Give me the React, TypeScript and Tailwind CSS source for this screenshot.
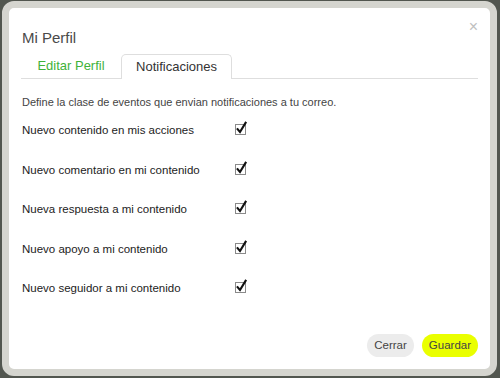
const options = [
  'Nuevo contenido en mis acciones',
  'Nuevo comentario en mi contenido',
  'Nueva respuesta a mi contenido',
  'Nuevo apoyo a mi contenido',
  'Nuevo seguidor a mi contenido',
];

function CheckedBox() {
  return (
    <svg width="16" height="16" viewBox="0 0 16 16" className="block">
      <rect x="1.5" y="3.5" width="10" height="10" fill="#fff" stroke="#8a8a8a" strokeWidth="1" />
      <path d="M3.6 8.2 L6 11 L11.6 1.8" fill="none" stroke="#111" strokeWidth="2.1" strokeLinecap="square" />
    </svg>
  );
}

export default function App() {
  return (
    <div className="h-[378px] w-[500px] overflow-hidden bg-[#52564f] pl-[2px] pt-[1px] font-['Liberation_Sans',Arial,sans-serif]">
      <div className="h-[375px] w-[495px] rounded-[12px] border-[7px] border-[#d5d5cf] bg-white">
        <div className="relative flex h-full flex-col rounded-[3px] px-[12px] pt-[21px]">
          <button className="absolute right-[12px] top-[11px] text-[16px] leading-none text-[#c0c0c0]">×</button>
          <h1 className="pl-px text-[15px] leading-[18px] text-[#4a4a4a]">Mi Perfil</h1>

          <div className="mt-[7px] flex h-[25px] items-end border-b border-[#dedede]">
            <div className="flex h-[24px] w-[100px] items-center justify-center text-[13px] text-[#3fb23a]">
              Editar Perfil
            </div>
            <div className="-mb-px flex h-[25px] w-[111px] items-center justify-center rounded-t-[5px] border border-b-0 border-[#dedede] bg-white text-[13px] text-[#333]">
              Notificaciones
            </div>
          </div>

          <p className="mt-[16px] pl-px text-[11px] leading-[14px] text-[#444]">
            Define la clase de eventos que envian notificaciones a tu correo.
          </p>

          <ul className="mt-[12px] flex flex-col">
            {options.map((o) => (
              <li key={o} className="flex h-[39.5px] items-start">
                <span className="w-[213px] pl-px pt-[2px] text-[11.5px] leading-[14px] text-[#222]">{o}</span>
                <CheckedBox />
              </li>
            ))}
          </ul>

          <div className="mt-auto mb-[12px] flex justify-end gap-[8px]">
            <button className="h-[23px] rounded-full bg-[#ececec] px-[7px] text-[11.5px] text-[#444]">Cerrar</button>
            <button className="h-[23px] rounded-full bg-[#eaff00] px-[7px] text-[11.5px] text-[#444]">Guardar</button>
          </div>
        </div>
      </div>
    </div>
  );
}
